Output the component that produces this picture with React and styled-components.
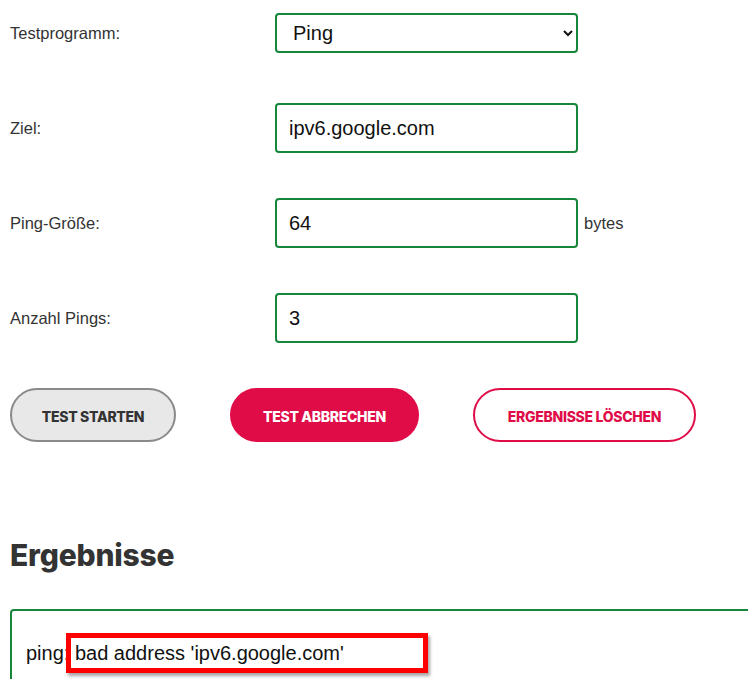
import React from "react";
import styled, { createGlobalStyle } from "styled-components";

const GlobalStyle = createGlobalStyle`
  html, body {
    margin: 0;
    padding: 0;
    background: #fff;
    overflow: hidden;
  }
  body {
    font-family: "Liberation Sans", Arial, sans-serif;
    color: #333;
  }
`;

const green = "#17863a";
const red = "#e00c48";

const Page = styled.div`
  box-sizing: border-box;
  height: 679px;
  padding: 8px 0 0 10px;
  overflow: hidden;
`;

const Form = styled.div`
  display: flex;
  flex-direction: column;
  gap: 45px;
`;

const Row = styled.div`
  display: grid;
  grid-template-columns: 265px 303px auto;
  align-items: center;
  height: 50px;
`;

const Label = styled.label`
  font-size: 16.5px;
  color: #333;
`;

const Select = styled.select`
  height: 40px;
  border: 2px solid ${green};
  border-radius: 4px;
  background: #fff;
  padding: 0 8px 0 12px;
  font-family: "Liberation Sans", Arial, sans-serif;
  font-size: 20px;
  color: #111;
  outline: none;
`;

const Input = styled.input`
  box-sizing: border-box;
  width: 100%;
  height: 50px;
  border: 2px solid ${green};
  border-radius: 4px;
  padding: 0 12px;
  font-family: "Liberation Sans", Arial, sans-serif;
  font-size: 20px;
  color: #111;
  outline: none;
`;

const Suffix = styled.span`
  font-size: 16.5px;
  color: #333;
  padding-left: 6px;
`;

const Buttons = styled.div`
  display: flex;
  gap: 54px;
  margin-top: 45px;
`;

const Button = styled.button`
  box-sizing: border-box;
  height: 54px;
  width: ${(p) => p.$w}px;
  padding: 3px 0 0;
  border-radius: 27px;
  font-family: Inter, "Liberation Sans", sans-serif;
  font-weight: 800;
  font-size: 14px;
  letter-spacing: -0.3px;
  text-transform: uppercase;
  cursor: pointer;
  border: 2px solid
    ${(p) => (p.$variant === "grey" ? "#8a8a8a" : red)};
  background: ${(p) =>
    p.$variant === "grey" ? "#e8e8e8" : p.$variant === "red" ? red : "#fff"};
  color: ${(p) =>
    p.$variant === "grey" ? "#333" : p.$variant === "red" ? "#fff" : red};
`;

const Heading = styled.h2`
  margin: 98px 0 0;
  font-family: Inter, "Liberation Sans", sans-serif;
  font-weight: 800;
  font-size: 30px;
  line-height: 31px;
  letter-spacing: -0.2px;
  color: #333;
`;

const ResultBox = styled.div`
  position: relative;
  margin-top: 38px;
  width: 760px;
  height: 100px;
  border: 2px solid ${green};
  border-radius: 4px;
  padding: 31px 14px;
  box-sizing: border-box;
  font-size: 20px;
  line-height: 23px;
  color: #111;
`;

const Highlight = styled.div`
  position: absolute;
  left: 54px;
  top: 22px;
  width: 362px;
  height: 40px;
  box-sizing: border-box;
  border: 5px solid #ff0000;
  box-shadow: 2px 3px 3px rgba(0, 0, 0, 0.35);
  pointer-events: none;
`;

export default function App() {
  return (
    <>
      <GlobalStyle />
      <Page>
        <Form>
          <Row>
            <Label>Testprogramm:</Label>
            <Select defaultValue="ping">
              <option value="ping">Ping</option>
              <option value="traceroute">Traceroute</option>
            </Select>
          </Row>
          <Row>
            <Label>Ziel:</Label>
            <Input defaultValue="ipv6.google.com" />
          </Row>
          <Row>
            <Label>Ping-Größe:</Label>
            <Input defaultValue="64" />
            <Suffix>bytes</Suffix>
          </Row>
          <Row>
            <Label>Anzahl Pings:</Label>
            <Input defaultValue="3" />
          </Row>
        </Form>
        <Buttons>
          <Button $variant="grey" $w={166}>Test starten</Button>
          <Button $variant="red" $w={189}>Test abbrechen</Button>
          <Button $variant="outline" $w={223}>Ergebnisse löschen</Button>
        </Buttons>
        <Heading>Ergebnisse</Heading>
        <ResultBox>
          ping: bad address 'ipv6.google.com'
          <Highlight />
        </ResultBox>
      </Page>
    </>
  );
}
